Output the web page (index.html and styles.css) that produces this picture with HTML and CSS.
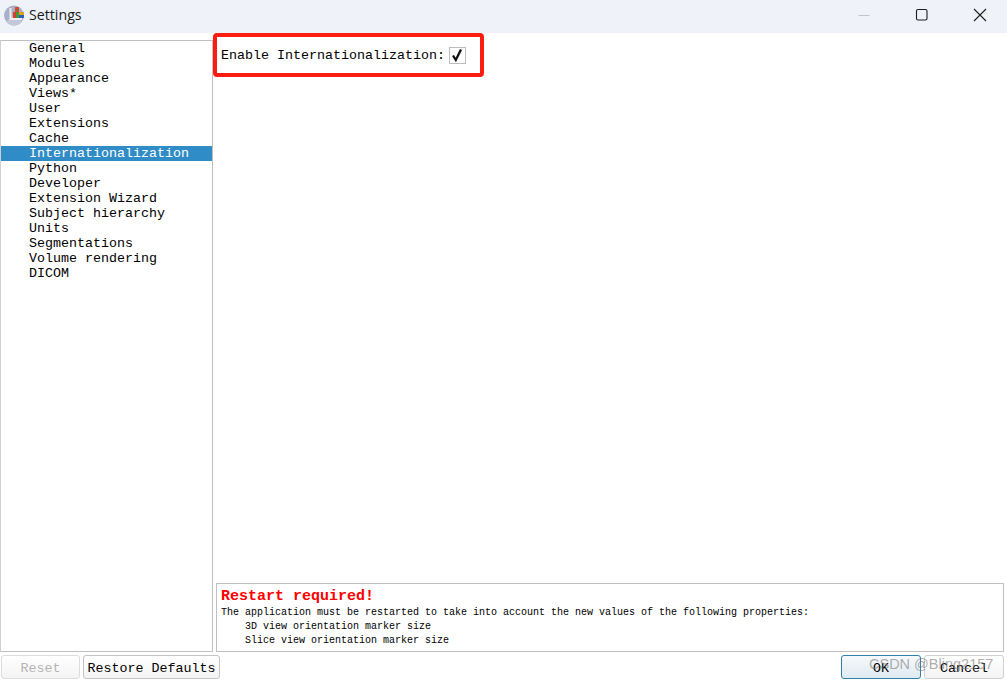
FILE: index.html
```html
<!DOCTYPE html>
<html lang="en">
<head>
<meta charset="utf-8">
<title>Settings</title>
<link rel="stylesheet" href="styles.css">
</head>
<body>
<div class="window">
  <header class="titlebar">
    <svg class="app-icon" width="22" height="22" viewBox="0 0 22 22">
      <circle cx="11" cy="11.5" r="10" fill="#a9afc9"/>
      <path d="M11 11.5L19 17.5A10 10 0 0 1 3 17.5Z" fill="#c3c7da"/>
      <path d="M7.5 4v11H19" fill="none" stroke="#eceef4" stroke-width="2"/>
      <rect x="10" y="8" width="3" height="6" fill="#d8402a"/>
      <rect x="12" y="3" width="4" height="5" fill="#c8502a"/>
      <rect x="13" y="8" width="3" height="6" fill="#3f9a3a"/>
      <rect x="16" y="8" width="5" height="3" fill="#e2a020"/>
      <rect x="16" y="11" width="5" height="3" fill="#2f63b8"/>
    </svg>
    <span class="title">Settings</span>
    <div class="controls">
      <svg class="ctl" width="14" height="14" viewBox="0 0 14 14"><path d="M1.5 7.5h11" stroke="#c2c4c9" stroke-width="1"/></svg>
      <svg class="ctl" width="14" height="14" viewBox="0 0 14 14"><rect x="1.5" y="1.5" width="10.5" height="10.5" rx="1.5" fill="none" stroke="#1c1c1c" stroke-width="1.1"/></svg>
      <svg class="ctl" width="14" height="14" viewBox="0 0 14 14"><path d="M1 1l12 12M13 1L1 13" stroke="#1c1c1c" stroke-width="1.1"/></svg>
    </div>
  </header>
  <main class="content">
    <ul class="nav">
      <li>General</li>
      <li>Modules</li>
      <li>Appearance</li>
      <li>Views*</li>
      <li>User</li>
      <li>Extensions</li>
      <li>Cache</li>
      <li class="selected">Internationalization</li>
      <li>Python</li>
      <li>Developer</li>
      <li>Extension Wizard</li>
      <li>Subject hierarchy</li>
      <li>Units</li>
      <li>Segmentations</li>
      <li>Volume rendering</li>
      <li>DICOM</li>
    </ul>
    <section class="panel">
      <div class="option">
        <span>Enable Internationalization:</span>
        <span class="checkbox">
          <svg width="15" height="15" viewBox="0 0 15 15"><path d="M3 7.5l2.8 4.5L11 1.5" fill="none" stroke="#111" stroke-width="2.3"/></svg>
        </span>
      </div>
      <div class="notice">
        <div class="notice-title">Restart required!</div>
        <div class="line">The application must be restarted to take into account the new values of the following properties:</div>
        <div class="line prop">3D view orientation marker size</div>
        <div class="line prop">Slice view orientation marker size</div>
      </div>
    </section>
  </main>
  <footer class="buttons">
    <button class="btn reset" disabled>Reset</button>
    <button class="btn restore">Restore Defaults</button>
    <span class="spacer"></span>
    <button class="btn ok">OK</button>
    <button class="btn cancel">Cancel</button>
  </footer>
  <div class="highlight"></div>
  <div class="watermark">CSDN @Bling2157</div>
</div>
</body>
</html>
```
FILE: styles.css
```css
* { box-sizing: border-box; }
html, body { margin: 0; padding: 0; background: #fff; }
body { overflow: hidden; }
.window {
  position: relative;
  width: 1007px;
  height: 681px;
  display: flex;
  flex-direction: column;
  font-family: "Liberation Mono", monospace;
  font-size: 13.33px;
  color: #000;
}
.titlebar {
  height: 33px;
  flex: none;
  display: flex;
  align-items: center;
  padding: 0 0 4px 3px;
  background: #eff2f9;
}
.app-icon { flex: none; }
.title {
  margin-left: 4px;
  font-family: "Open Sans", sans-serif;
  font-size: 14.2px;
  color: #1b1b1b;
}
.controls {
  margin-left: auto;
  display: flex;
  align-items: center;
  gap: 44px;
  padding-right: 20px;
}
.content {
  flex: none;
  height: 612px;
  margin-top: 7px;
  display: flex;
}
.nav {
  list-style: none;
  margin: 0;
  padding: 0;
  width: 213px;
  flex: none;
  border: 1px solid #c0c0c0;
  border-left-color: #d0d0d0;
}
.nav li {
  height: 15px;
  line-height: 15px;
  padding-left: 28px;
  white-space: pre;
}
.nav li.selected { background: #308cc6; color: #fff; }
.panel {
  flex: 1;
  display: flex;
  flex-direction: column;
  padding: 0 3px;
}
.option {
  display: flex;
  align-items: center;
  gap: 4px;
  padding: 0 0 0 5px;
  height: 30px;
}
.checkbox {
  width: 17px;
  height: 17px;
  border: 1px solid #bdbdbd;
  background: #fff;
  display: flex;
  align-items: center;
  justify-content: center;
}
.notice {
  margin-top: auto;
  height: 69px;
  border: 1px solid #c0c0c0;
  padding: 4px 4px 0;
  font-size: 10px;
  line-height: 14px;
}
.notice-title {
  color: #f00;
  font-size: 15px;
  font-weight: bold;
  line-height: 18px;
}
.prop { padding-left: 24px; }
.buttons {
  flex: none;
  height: 29px;
  display: flex;
  gap: 3px;
  padding: 3px 3px 2px 1px;
}
.spacer { flex: 1; }
.btn {
  height: 24px;
  padding: 2px 0 0;
  margin: 0;
  border: 1px solid #c4c4c4;
  border-radius: 3px;
  background: linear-gradient(#fff, #f4f4f4);
  font: inherit;
  color: #000;
}
.reset { width: 79px; color: #b4b4b4; border-color: #dcdcdc; }
.restore { width: 137px; }
.ok {
  width: 80px;
  border-color: #2f7fa8;
  background: linear-gradient(#f6f9fb, #dfeaf1);
}
.cancel { width: 80px; border-color: #d0d0d0; }
.highlight {
  position: absolute;
  left: 213px;
  top: 33px;
  width: 271px;
  height: 44px;
  border: 4px solid #fb1d12;
  border-radius: 4px;
}
.watermark {
  position: absolute;
  left: 869px;
  top: 656px;
  font-family: "Liberation Sans", sans-serif;
  font-size: 14.5px;
  color: rgba(120, 120, 120, 0.6);
  white-space: nowrap;
}
```
